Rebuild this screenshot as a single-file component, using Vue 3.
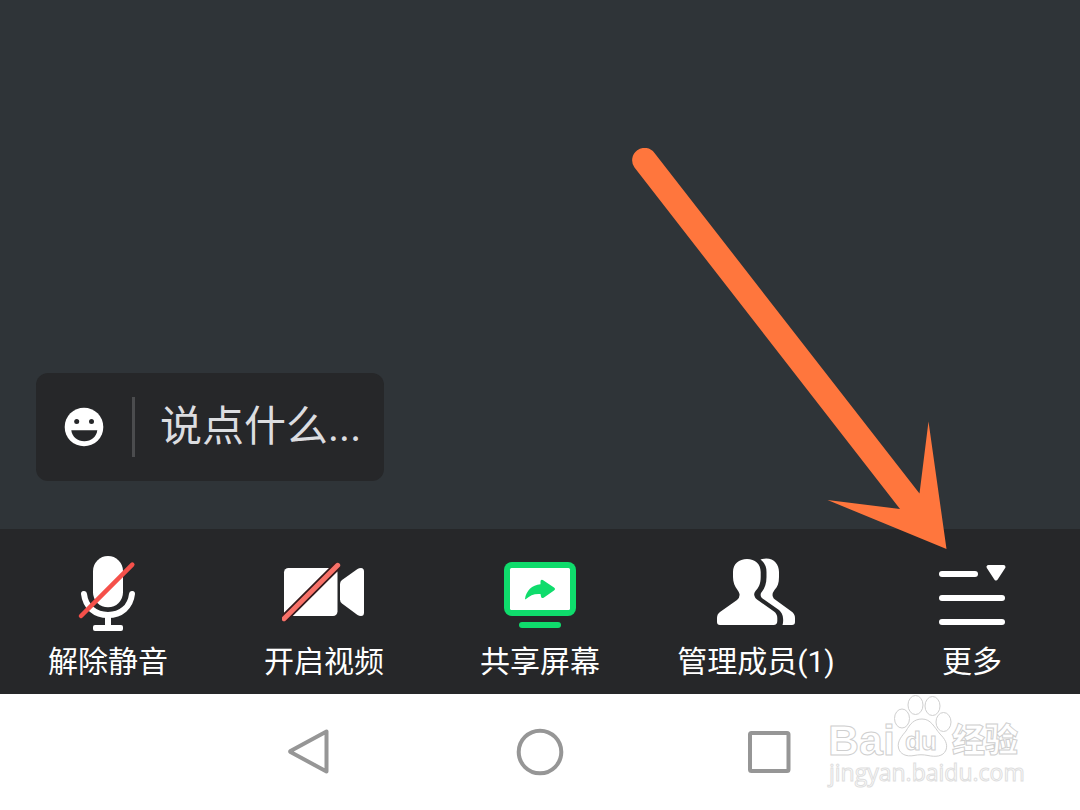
<script setup>
import { ref } from 'vue'

const message = ref('')
const tools = [
  { id: 'mic', label: '解除静音' },
  { id: 'video', label: '开启视频' },
  { id: 'share', label: '共享屏幕' },
  { id: 'members', label: '管理成员(1)' },
  { id: 'more', label: '更多' },
]
</script>

<template>
  <div class="screen">
    <main class="stage">
      <div class="chat">
        <button class="emoji" type="button" aria-label="表情">
          <svg viewBox="0 0 40 40" width="40" height="40">
            <circle cx="20" cy="20" r="19.3" fill="#fff" />
            <circle cx="12.7" cy="14.4" r="2.5" fill="#262729" />
            <circle cx="27.5" cy="14.4" r="2.5" fill="#262729" />
            <path d="M7.3 23.3H33.3C32.5 30 27 34.2 20.3 34.2S8.100 30 7.300 23.300Z" fill="#262729" />
          </svg>
        </button>
        <span class="divider"></span>
        <input v-model="message" class="field" type="text" placeholder="说点什么..." aria-label="说点什么" />
      </div>
    </main>

    <div class="toolbar">
      <button v-for="tool in tools" :key="tool.id" class="tool" type="button">
        <svg v-if="tool.id === 'mic'" class="icon" viewBox="0 0 84 88">
          <rect x="27" y="3" width="30" height="51.300" rx="15" fill="#fff" />
          <path d="M18 41C19.500 54 29 62 42 62S64.500 54 66 41" fill="none" stroke="#fff" stroke-width="6" stroke-linecap="round" />
          <path d="M42 62V75" stroke="#fff" stroke-width="6" />
          <rect x="27" y="72" width="30" height="6" rx="2" fill="#fff" />
          <path d="M15 63L66.300 11.700" stroke="#f5504a" stroke-width="4.500" stroke-linecap="round" />
        </svg>
        <svg v-else-if="tool.id === 'video'" class="icon" viewBox="0 0 84 88">
          <rect x="2" y="15" width="53.500" height="48" rx="4.500" fill="#fff" />
          <path d="M58 31Q58 28.500 60 27L75.500 16Q77 15 79 15Q82 15 82 18.500V59.500Q82 63 79 63Q77 63 75.500 62L60 50.500Q58 49 58 46.500Z" fill="#fff" />
          <path d="M2 65.700L55.700 12.300" stroke="#35191b" stroke-width="8.500" />
          <path d="M2 65.700L55.700 12.300" stroke="#f87168" stroke-width="5" stroke-linecap="round" />
        </svg>
        <svg v-else-if="tool.id === 'share'" class="icon" viewBox="0 0 84 88">
          <rect x="6" y="9" width="72" height="54" rx="8" fill="#0fdc6c" />
          <rect x="12" y="15" width="60" height="42" rx="1.500" fill="#fff" />
          <path d="M27 46C28 38 34 32 42.500 31.300V28.500Q42.500 26.200 44.800 27L56 34.500Q58 36 56 37.500L46 44.500Q43.500 46 43 43.500L42.500 41C36 40.500 32 42.500 28 46Q27 46.700 27 46Z" fill="#0fdc6c" />
          <rect x="21" y="69" width="42" height="6" rx="3" fill="#0fdc6c" />
        </svg>
        <svg v-else-if="tool.id === 'members'" class="icon" viewBox="0 0 84 88">
          <path d="M33 6C41 6 46.700 11 46.700 19V24C46.700 31 44.500 35 41.500 38Q39.500 40.500 40.500 43Q41 45 43 46.500L60 58.500Q63.300 61 63.300 65V68Q63.300 72 59.500 72H6Q3 72 3 69V65Q3 61 6 59L23 47Q26 44.500 25.500 41Q25 39 23.500 37C20.500 33 19 29 19 24V19C19 11 25 6 33 6Z" fill="#fff" />
          <path d="M46.500 6.500C58 3 65 10 65 19V24C65 30 63.500 34 60.500 37Q57.500 41 59 44Q59.500 45.500 61 46.500L77.500 58.500Q81 61 81 65V69Q81 72 78 72H68.500Q69.500 69 69 65Q68.500 60 65 57L50 46.500Q45.500 44 47 40C50.500 36 52.500 31 52.500 24V19Q52.500 11 46.500 6.500Z" fill="#fff" />
        </svg>
        <svg v-else class="icon" viewBox="0 0 84 88">
          <rect x="9" y="18" width="39" height="6" rx="3" fill="#fff" />
          <path d="M58.500 14H73.500L66 25.500Z" fill="#fff" stroke="#fff" stroke-width="4" stroke-linejoin="round" />
          <rect x="9" y="42" width="66" height="6" rx="3" fill="#fff" />
          <rect x="9" y="66" width="66" height="6" rx="3" fill="#fff" />
        </svg>
        <span class="label">{{ tool.label }}</span>
      </button>
    </div>

    <nav class="nav">
      <button type="button" aria-label="返回">
        <svg viewBox="0 0 50 50" width="50" height="50">
          <path d="M41.500 4.500V44.500L5.500 25Q4.700 24.500 5.500 24Z" class="line" />
        </svg>
      </button>
      <button type="button" aria-label="主页">
        <svg viewBox="0 0 50 50" width="50" height="50">
          <circle cx="25" cy="25" r="21.300" class="line" />
        </svg>
      </button>
      <button type="button" aria-label="最近任务">
        <svg viewBox="0 0 50 50" width="50" height="50">
          <rect x="5" y="6" width="38.500" height="38" rx="1.500" class="line" />
        </svg>
      </button>
    </nav>

    <svg class="arrow" viewBox="632 148 316 402" aria-hidden="true">
      <path d="M634.500 167.500A12 12 0 0 1 654.500 153L919.500 493.500L928.500 421.500L946.500 549L827.500 500L900 509Z" fill="#ff763d" />
    </svg>

    <svg class="watermark" viewBox="820 690 210 110">
      <g fill="#fff" stroke="#cfcfcf">
        <text x="828" y="755" class="brand">Bai</text>
        <ellipse cx="902" cy="718.500" rx="7.500" ry="9.500" />
        <ellipse cx="915.500" cy="705" rx="7.500" ry="9.500" />
        <ellipse cx="932.500" cy="706" rx="7.500" ry="9.500" />
        <ellipse cx="943.500" cy="722" rx="7.500" ry="9.500" />
        <path d="M922 719C931 719 934 727 940 734C945 739 948 744 946 750C943 757 935 757 928 755.500C923 754.500 919 754.500 914 755.500C906 757 900 754 898.500 748C897 741 902 736 906 731C910 724 914 719 922 719Z" />
        <text x="905" y="750" class="du">du</text>
        <text x="952" y="752" class="name">经验</text>
      </g>
      <text x="829" y="781" class="site">jingyan.baidu.com</text>
    </svg>
  </div>
</template>

<style>
body {
  margin: 0;
}
</style>

<style scoped>
.screen {
  position: relative;
  display: flex;
  flex-direction: column;
  min-height: 100vh;
  overflow: hidden;
  background: #2f3438;
  font-family: Roboto, "Noto Sans CJK SC", sans-serif;
}
button {
  margin: 0;
  padding: 0;
  border: 0;
  background: none;
  color: inherit;
  font: inherit;
  cursor: pointer;
}
svg {
  display: block;
}
.stage {
  flex: 1;
  display: flex;
  align-items: flex-end;
  padding: 0 36px 48px;
}
.chat {
  display: flex;
  align-items: center;
  box-sizing: border-box;
  width: 348px;
  height: 108px;
  padding: 0 12px 0 28px;
  border-radius: 12px;
  background: #262729;
}
.divider {
  flex: none;
  width: 3px;
  height: 60px;
  margin: 0 25px 0 28px;
  background: #4b4c4e;
}
.field {
  flex: 1;
  min-width: 0;
  height: 60px;
  padding: 0;
  border: 0;
  outline: 0;
  background: none;
  color: #dcdde0;
  font: 42px/60px Roboto, "Noto Sans CJK SC", sans-serif;
}
.field::placeholder {
  color: #dcdde0;
  opacity: 1;
}
.toolbar {
  display: grid;
  grid-template-columns: repeat(5, 1fr);
  padding: 24px 0 11px;
  background: #262729;
}
.tool {
  display: flex;
  flex-direction: column;
  align-items: center;
  color: #fff;
}
.icon {
  width: 84px;
  height: 88px;
}
.label {
  font-size: 30px;
  line-height: 42px;
  white-space: nowrap;
}
.nav {
  display: flex;
  justify-content: center;
  height: 116px;
  background: #fff;
}
.nav button {
  display: flex;
  align-items: center;
  justify-content: center;
  width: 230px;
}
.line {
  fill: none;
  stroke: #969696;
  stroke-width: 4;
  stroke-linejoin: round;
}
.arrow {
  position: absolute;
  right: 132px;
  bottom: 260px;
  width: 316px;
  height: 402px;
  pointer-events: none;
}
.watermark {
  position: absolute;
  right: 50px;
  bottom: 10px;
  width: 210px;
  height: 110px;
  pointer-events: none;
}
.brand {
  font: bold 43px "Liberation Sans", sans-serif;
}
.du {
  font: bold 26px "Liberation Sans", sans-serif;
}
.name {
  font: 900 33px "Noto Sans CJK SC", sans-serif;
}
.site {
  fill: #fff;
  stroke: #dedede;
  font: 23px "Open Sans", sans-serif;
}
</style>
